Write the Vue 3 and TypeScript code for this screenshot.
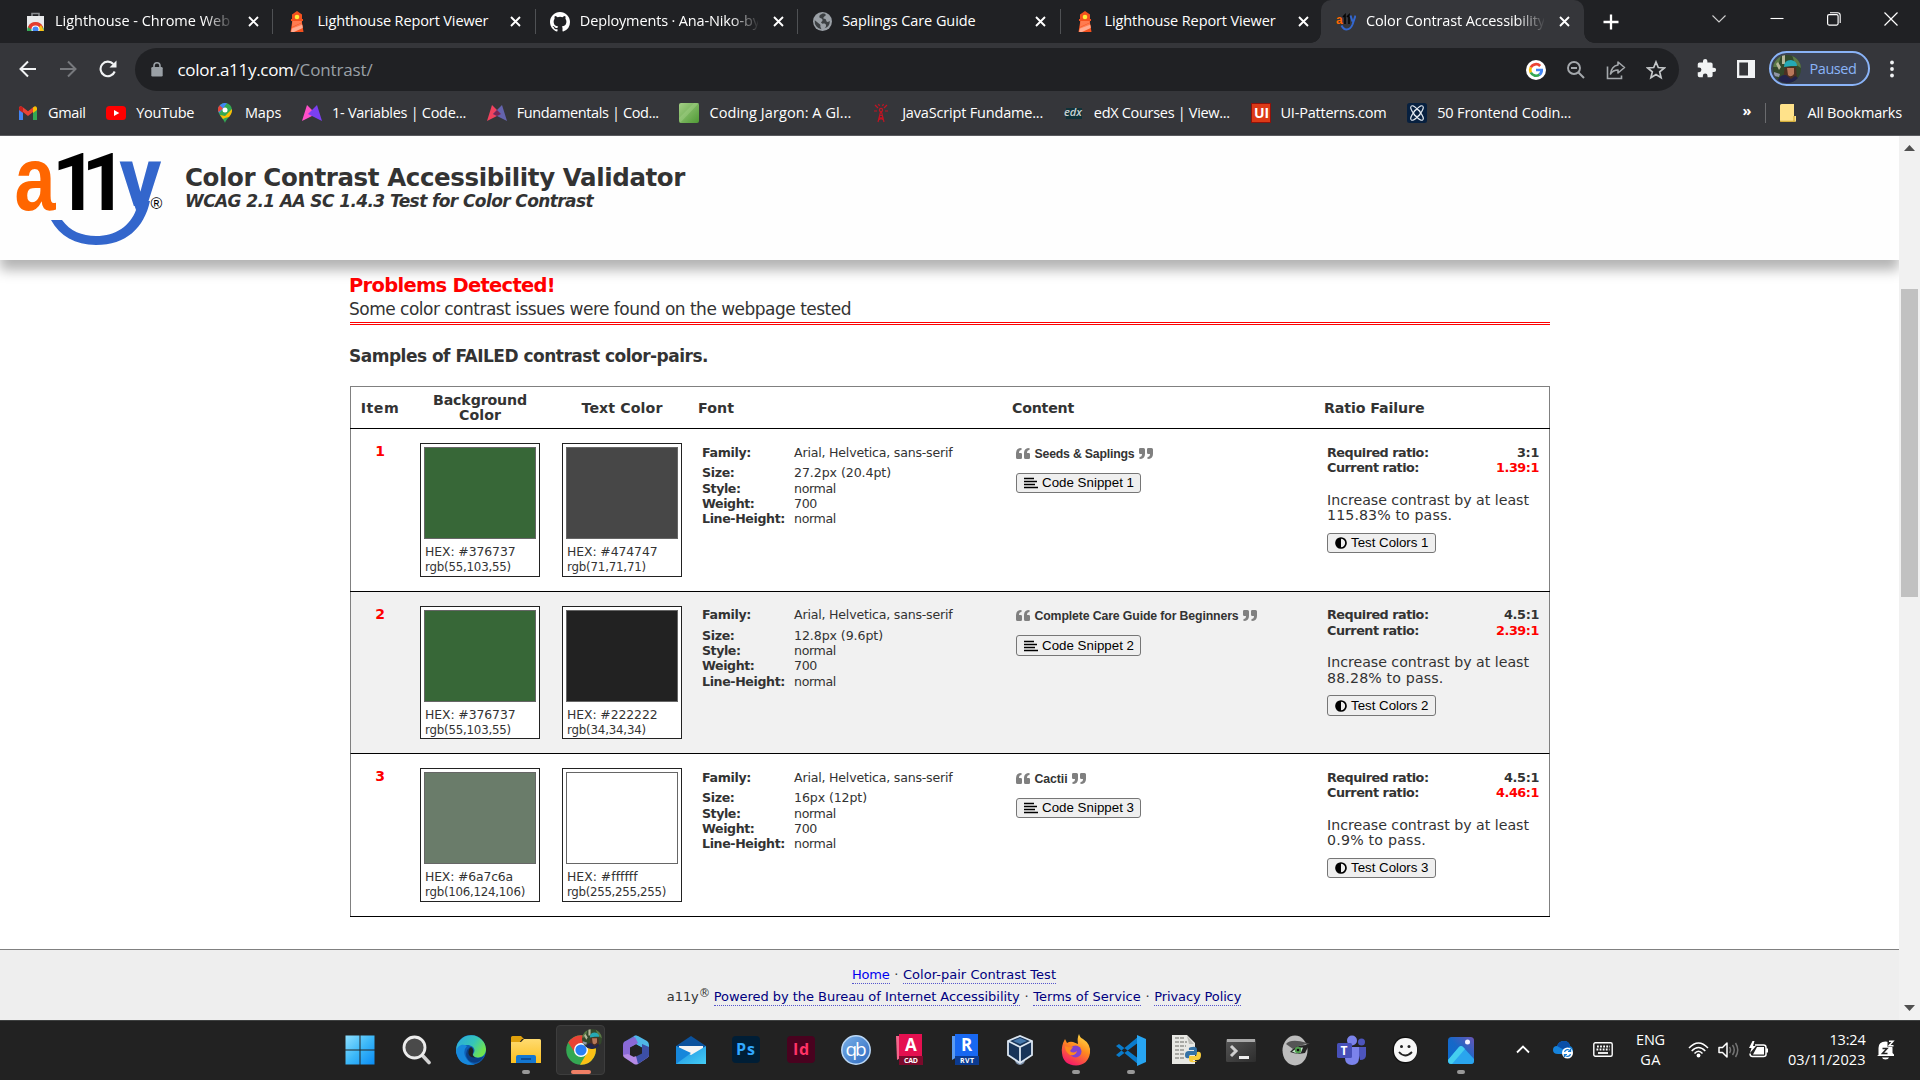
<script setup lang="ts">
import type { Directive } from 'vue'

// Spreads the letters of a label so that it takes up the given width.
const vFit: Directive<HTMLElement, number> = {
  mounted(el, { value }) {
    const count = (el.textContent ?? '').length
    const natural = el.getBoundingClientRect().width
    el.style.letterSpacing = `${(value - natural) / count}px`
    el.style.width = `${value}px`
  },
}

interface Tab { icon: string; title: string; width: number; fade?: boolean; active?: boolean }
const tabs: Tab[] = [
  { icon: 'store', title: 'Lighthouse - Chrome Web', width: 175, fade: true },
  { icon: 'light', title: 'Lighthouse Report Viewer', width: 171 },
  { icon: 'github', title: 'Deployments · Ana-Niko-by', width: 180, fade: true },
  { icon: 'globe', title: 'Saplings Care Guide', width: 133.5 },
  { icon: 'light', title: 'Lighthouse Report Viewer', width: 171 },
  { icon: 'a11y', title: 'Color Contrast Accessibility', width: 179, fade: true, active: true },
]

interface Bookmark { icon: string; label: string; width: number }
const bookmarks: Bookmark[] = [
  { icon: 'gmail', label: 'Gmail', width: 37.5 },
  { icon: 'youtube', label: 'YouTube', width: 58 },
  { icon: 'maps', label: 'Maps', width: 36.5 },
  { icon: 'vars', label: '1- Variables | Code...', width: 134 },
  { icon: 'fund', label: 'Fundamentals | Cod...', width: 142 },
  { icon: 'jargon', label: 'Coding Jargon: A Gl...', width: 142 },
  { icon: 'tower', label: 'JavaScript Fundame...', width: 141 },
  { icon: 'edx', label: 'edX Courses | View...', width: 136 },
  { icon: 'ui', label: 'UI-Patterns.com', width: 106 },
  { icon: 'react', label: '50 Frontend Codin...', width: 134 },
]

interface Swatch { hex: string; hexWidth: number; rgb: string; rgbWidth: number }
interface Row {
  id: number
  swatches: Swatch[]
  size: string
  sizeWidth: number
  content: string
  contentWidth: number
  required: string
  requiredWidth: number
  current: string
  advice: string
  adviceWidth: number
}
const green: Swatch = { hex: '#376737', hexWidth: 90.5, rgb: 'rgb(55,103,55)', rgbWidth: 86 }
const rows: Row[] = [
  {
    id: 1,
    swatches: [green, { hex: '#474747', hexWidth: 90.5, rgb: 'rgb(71,71,71)', rgbWidth: 79 }],
    size: '27.2px (20.4pt)', sizeWidth: 97,
    content: 'Seeds & Saplings', contentWidth: 100,
    required: '3:1', requiredWidth: 22, current: '1.39:1',
    advice: '115.83% to pass.', adviceWidth: 125,
  },
  {
    id: 2,
    swatches: [green, { hex: '#222222', hexWidth: 90.5, rgb: 'rgb(34,34,34)', rgbWidth: 79 }],
    size: '12.8px (9.6pt)', sizeWidth: 89,
    content: 'Complete Care Guide for Beginners', contentWidth: 204,
    required: '4.5:1', requiredWidth: 35, current: '2.39:1',
    advice: '88.28% to pass.', adviceWidth: 116.5,
  },
  {
    id: 3,
    swatches: [
      { hex: '#6a7c6a', hexWidth: 88, rgb: 'rgb(106,124,106)', rgbWidth: 100 },
      { hex: '#ffffff', hexWidth: 70, rgb: 'rgb(255,255,255)', rgbWidth: 99 },
    ],
    size: '16px (12pt)', sizeWidth: 73,
    content: 'Cactii', contentWidth: 33,
    required: '4.5:1', requiredWidth: 35, current: '4.46:1',
    advice: '0.9% to pass.', adviceWidth: 99,
  },
]
</script>

<template>
  <div class="screen">
    <svg class="defs" width="0" height="0">
      <defs>
        <linearGradient id="gWin" x1="0" y1="0" x2="1" y2="1"><stop offset="0" stop-color="#8fe0ff" /><stop offset=".5" stop-color="#3cb8f8" /><stop offset="1" stop-color="#0a8cf5" /></linearGradient>
        <linearGradient id="gEdge" x1="0" y1="0" x2="1" y2=".5"><stop offset="0" stop-color="#2aa7e2" /><stop offset=".6" stop-color="#35c5b8" /><stop offset="1" stop-color="#6fe34f" /></linearGradient>
        <linearGradient id="gFolder" x1="0" y1="0" x2="0" y2="1"><stop offset="0" stop-color="#ffdb70" /><stop offset="1" stop-color="#fcbf1e" /></linearGradient>
        <linearGradient id="gMail" x1="0" y1="0" x2="1" y2="1"><stop offset="0" stop-color="#1c8de0" /><stop offset="1" stop-color="#44cdf5" /></linearGradient>
        <linearGradient id="gFox" x1=".8" y1="0" x2=".3" y2="1"><stop offset="0" stop-color="#ffe14a" /><stop offset=".45" stop-color="#ff8a1e" /><stop offset="1" stop-color="#f5156c" /></linearGradient>
        <linearGradient id="gPhoto" x1="1" y1="0" x2="0" y2="1"><stop offset="0" stop-color="#6a55b5" /><stop offset=".5" stop-color="#1668c8" /><stop offset="1" stop-color="#0a6cd0" /></linearGradient>
        <linearGradient id="gJargon" x1="0" y1="0" x2="1" y2="1"><stop offset="0" stop-color="#a4cf86" /><stop offset="1" stop-color="#4f9a35" /></linearGradient>
        <linearGradient id="gQb" x1="0" y1="0" x2="1" y2="1"><stop offset="0" stop-color="#78b0ea" /><stop offset="1" stop-color="#2e69bd" /></linearGradient>
        <linearGradient id="gTerm" x1="0" y1="0" x2="1" y2="1"><stop offset="0" stop-color="#555" /><stop offset="1" stop-color="#2d2d2d" /></linearGradient>
        <clipPath id="avatarClip"><circle cx="14" cy="14" r="14" /></clipPath>
        <g id="avatar" clip-path="url(#avatarClip)">
          <rect width="28" height="28" fill="#33482c" />
          <path d="M0 0h8l-3 12H0zM19 0h9v13l-6-4z" fill="#5c7a48" />
          <path d="M9 0h3v9H9zM3 9l2-2 3 5-2 3z" fill="#b6b79a" />
          <path d="M12 12h11l1 12H10z" fill="#4c2f22" />
          <path d="M14 13h7v6q-3 4-6 1z" fill="#b8775a" />
          <path d="M4 28q2-9 9-8l5 4 4-3q5 2 5 7z" fill="#23244a" />
          <path d="M11 12q0-7 7-7 6 1 6 6l-6 0z" fill="#25a9b5" />
          <path d="M1 17l6 2-1 3-5-1z" fill="#8f95a5" />
        </g>
      </defs>
    </svg>

    <header class="tabstrip">
      <div v-for="(tab, i) in tabs" :key="i" class="tab" :class="{ active: tab.active, last: i === 4 }">
        <span class="favicon">
          <svg v-if="tab.icon === 'store'" width="19" height="20" viewBox="0 0 19 20"><path d="M6 4V1.500h7V4" fill="none" stroke="#888b8f" stroke-width="1.600" /><path d="M1 4h17v15H1z" fill="#e9eaec" /><path d="M1 19a8.500 8.500 0 0 1 17 0z" fill="#34a853" /><path d="M2 15q2-5 7.500-5t7.500 5l-1.500 2h-11z" fill="#e33b2e" /><path d="M10 19l5-6 3 6z" fill="#fbc116" /><circle cx="9.500" cy="17.500" r="4" fill="#fff" /><circle cx="9.500" cy="17.500" r="3" fill="#4285f4" /><path d="M1 19h17v1H1z" fill="#202124" /></svg>
          <svg v-else-if="tab.icon === 'light'" width="16" height="21" viewBox="0 0 16 21"><path d="M8 0l5 3.500V8h1v2h-1.300L14.500 21H1.500L3.300 10H2V8h1V3.500z" fill="#f4511e" /><path d="M3 16.500l9.800-4.500.7 4L2 20.500zM3.400 10h9.300l.2 1.500-10 4.500z" fill="#ff7b50" /><path d="M3 17.500l10.200-3.800.6 3.300L5 21H2.200z" fill="#ffab91" /><circle cx="8" cy="6" r="2.300" fill="#ffeb3b" /></svg>
          <svg v-else-if="tab.icon === 'github'" width="20" height="20" viewBox="0 0 16 16"><path fill="#fff" d="M8 0C3.580 0 0 3.580 0 8c0 3.540 2.290 6.530 5.470 7.590.4.070.55-.17.55-.38 0-.19-.01-.82-.01-1.490-2.010.37-2.530-.49-2.690-.94-.09-.23-.48-.94-.82-1.130-.28-.15-.68-.52-.01-.53.63-.01 1.080.58 1.230.82.72 1.210 1.870.87 2.330.66.07-.52.28-.87.51-1.070-1.780-.2-3.640-.89-3.640-3.950 0-.87.31-1.590.82-2.150-.08-.2-.36-1.020.08-2.120 0 0 .67-.21 2.200.82a7.700 7.700 0 0 1 4 0c1.530-1.040 2.200-.82 2.200-.82.44 1.100.16 1.920.08 2.120.51.56.82 1.270.82 2.150 0 3.070-1.870 3.750-3.650 3.950.29.25.54.73.54 1.480 0 1.070-.01 1.930-.01 2.200 0 .21.15.46.55.38A8.010 8.010 0 0 0 16 8c0-4.420-3.580-8-8-8" /></svg>
          <svg v-else-if="tab.icon === 'globe'" width="19" height="19" viewBox="0 0 18 18"><circle cx="9" cy="9" r="9" fill="#9aa0a6" /><path d="M2 8l5 4v2l1 2.300A7.500 7.500 0 0 1 1.600 8zM9 1.500c-1.500 1-3 1-3 3s3 1 3 3-2 1.500-1 3 3-.5 4 1 0 3-1 4a7.500 7.500 0 0 0 5-7l-2 1c-2 0-1-3-3-3s-1-2 0-2.500 1-1 1-1.500-1-1-3-1z" fill="#3c4043" /></svg>
          <svg v-else width="20" height="20" viewBox="0 0 20 20"><text x="0" y="12" font-family="Liberation Sans" font-weight="700" font-size="12" fill="#ff6600">a</text><path d="M7 5l2-2v9M11 5l2-2v9" fill="none" stroke="#050505" stroke-width="1.600" /><path d="M14.500 3.500l2 6M19.500 3.500l-3 9q-2 5-6 5-3 0-5-4" fill="none" stroke="#3367cf" stroke-width="2" /></svg>
        </span>
        <span class="tab-title" :class="{ fade: tab.fade }"><span v-fit="tab.width" class="fit">{{ tab.title }}</span></span>
        <svg class="tab-close" width="11" height="11" viewBox="0 0 11 11"><path d="M1 1l9 9M10 1l-9 9" stroke="#fff" stroke-width="1.900" /></svg>
      </div>
      <svg class="new-tab" width="16" height="16" viewBox="0 0 16 16"><path d="M8 .5v15M.5 8h15" stroke="#fff" stroke-width="2.300" /></svg>
      <div class="window-buttons">
        <svg width="14" height="14" viewBox="0 0 14 14"><path d="M.5 3.500L7 10l6.500-6.500" fill="none" stroke="#d0d0d0" stroke-width="1.100" /></svg>
        <svg width="14" height="14" viewBox="0 0 14 14"><path d="M.5 6.500h13" stroke="#fff" stroke-width="1.100" /></svg>
        <svg width="14" height="14" viewBox="0 0 14 14"><rect x=".6" y="2.600" width="10.500" height="10.500" rx="1.500" fill="none" stroke="#fff" stroke-width="1.200" /><path d="M3 .8h7.500a2.700 2.700 0 0 1 2.700 2.700V11" fill="none" stroke="#fff" stroke-width="1.100" /></svg>
        <svg width="14" height="14" viewBox="0 0 14 14"><path d="M.5.5l13 13M13.500.5l-13 13" stroke="#fff" stroke-width="1.200" /></svg>
      </div>
    </header>

    <div class="toolbar">
      <div class="nav">
        <svg width="18" height="18" viewBox="0 0 18 18"><path d="M17 9H2M9 1.500L1.500 9 9 16.500" fill="none" stroke="#f1f3f4" stroke-width="2" /></svg>
        <svg width="18" height="18" viewBox="0 0 18 18"><path d="M1 9h15M9 1.500L16.500 9 9 16.500" fill="none" stroke="#77797d" stroke-width="2" /></svg>
        <svg width="18" height="18" viewBox="0 0 18 18"><path d="M15.700 11.500A7.300 7.300 0 1 1 14.300 4" fill="none" stroke="#f1f3f4" stroke-width="2.100" /><path d="M17.500.5v7h-7z" fill="#f1f3f4" /></svg>
      </div>
      <div class="omnibox">
        <svg class="lock" width="12" height="15" viewBox="0 0 12 15"><rect x=".3" y="5" width="11.400" height="9.500" rx="1.300" fill="#9aa0a6" /><path d="M3 6V3.800a3 3 0 0 1 6 0V6" fill="none" stroke="#9aa0a6" stroke-width="1.600" /></svg>
        <span v-fit="116" class="fit host">color.a11y.com</span><span v-fit="79" class="fit path">/Contrast/</span>
        <div class="omni-icons">
          <svg width="20" height="20" viewBox="0 0 20 20"><circle cx="10" cy="10" r="10" fill="#fff" /><g fill="none" stroke-width="2.700"><path d="M14.200 6A5.800 5.800 0 0 0 4.800 7.500" stroke="#ea4335" /><path d="M4.800 7.400a5.800 5.800 0 0 0 0 5.200" stroke="#fbbc05" /><path d="M4.800 12.500a5.800 5.800 0 0 0 8.800 2" stroke="#34a853" /><path d="M13.400 14.700A5.600 5.600 0 0 0 15.700 10H10" stroke="#4285f4" /></g></svg>
          <svg width="20" height="20" viewBox="0 0 20 20"><circle cx="8" cy="8" r="6" fill="none" stroke="#a4a8ac" stroke-width="1.900" /><path d="M12.500 12.500L18 18M5 8h6" stroke="#a4a8ac" stroke-width="2" /></svg>
          <svg width="20" height="20" viewBox="0 0 20 20"><path d="M1.500 6.500v12h14v-3" fill="none" stroke="#a4a8ac" stroke-width="1.600" /><path d="M12 2l6.500 5.500L12 13v-3q-5 0-7.500 4Q5.500 6 12 5z" fill="none" stroke="#a4a8ac" stroke-width="1.600" stroke-linejoin="round" /></svg>
          <svg width="20" height="20" viewBox="0 0 20 20"><path d="M10 2l2.300 5.500 6 .5-4.600 3.900 1.400 5.800L10 14.600l-5.100 3.100 1.400-5.800L1.700 8l6-.5z" fill="none" stroke="#c4c7c9" stroke-width="1.700" /></svg>
        </div>
      </div>
      <svg class="puzzle" width="21" height="21" viewBox="0 0 24 24"><path fill="#f1f3f4" d="M20.500 11H19V7a2 2 0 0 0-2-2h-4V3.500a2.500 2.500 0 0 0-5 0V5H4a2 2 0 0 0-2 2v3.800h1.500a2.700 2.700 0 0 1 0 5.400H2V20a2 2 0 0 0 2 2h3.800v-1.500a2.700 2.700 0 0 1 5.400 0V22H17a2 2 0 0 0 2-2v-4h1.500a2.500 2.500 0 0 0 0-5" /></svg>
      <svg class="panel" width="18" height="18" viewBox="0 0 18 18"><path fill="#f1f3f4" fill-rule="evenodd" d="M0 0h18v18H0zM2.300 2.500v13h8.700v-13z" /></svg>
      <div class="profile">
        <svg width="28" height="28" viewBox="0 0 28 28"><use href="#avatar" /></svg>
        <span v-fit="47" class="fit">Paused</span>
      </div>
      <svg class="menu" width="4" height="18" viewBox="0 0 4 18"><g fill="#f1f3f4"><circle cx="2" cy="2.500" r="1.900" /><circle cx="2" cy="9" r="1.900" /><circle cx="2" cy="15.500" r="1.900" /></g></svg>
    </div>

    <nav class="bookmarks">
      <a v-for="b in bookmarks" :key="b.label" class="bookmark">
        <svg width="20" height="20" viewBox="0 0 20 20">
          <g v-if="b.icon === 'gmail'"><path d="M1 4v13h4V9z" fill="#4285f4" /><path d="M19 4v13h-4V9z" fill="#34a853" /><path d="M1 4.500Q2 2.500 4.500 4L10 8.200 15.500 4l-.5 5-5 4-5-4z" fill="#ea4335" /><path d="M15 4.500Q18 2 19 5v2l-4 3z" fill="#fbbc04" /><path d="M1 5v2l4 3V4.300Q2 2.500 1 5" fill="#c5221f" /></g>
          <g v-else-if="b.icon === 'youtube'"><rect y="3" width="20" height="14" rx="3.500" fill="#f00" /><path d="M8 7l5.300 3L8 13z" fill="#fff" /></g>
          <g v-else-if="b.icon === 'maps'"><path d="M10 20c-1-4-7-8-7-13a7 7 0 0 1 14 0c0 5-6 9-7 13" fill="#34a853" /><path d="M3 7a7 7 0 0 1 9-6.700L4.500 10Q3 9 3 7" fill="#4285f4" /><path d="M4.700 2.500L8 5.500 3.500 9Q2 5 4.700 2.500" fill="#ea4335" /><path d="M10 13l7-7q.5 4-3 8l-4 1-2 1-3-4z" fill="#fbbc04" /><circle cx="10" cy="7" r="2.500" fill="#fff" /></g>
          <g v-else-if="b.icon === 'vars'"><path d="M5 2l9 9L0 18z" fill="#ff4fc8" /><path d="M15 2l5 16L6 11z" fill="#7b3ff2" /></g>
          <g v-else-if="b.icon === 'fund'"><path d="M5 2l9 9L0 18z" fill="#f0425e" /><path d="M15 2l5 16L6 11z" fill="#6464ae" /><path d="M10 7l4 4-4 2-4-2z" fill="#7a2455" /></g>
          <g v-else-if="b.icon === 'jargon'"><rect width="20" height="20" rx="2" fill="url(#gJargon)" /><path d="M0 15L15 0h5L1 20z" fill="#a8d48c" opacity=".4" /></g>
          <g v-else-if="b.icon === 'tower'" fill="none" stroke="#c01423" stroke-width="1.200"><circle cx="9" cy="7" r="1.600" /><path d="M8.500 9L6 19M9.500 9L12 19M7 14l4.500 3M11 14l-4.500 3M7.600 12.500h3M3 2l3 3M15 2l-3 3M2 8h3M13 8h3M6.500 1l1 2M11.500 1l-1 2" /></g>
          <g v-else-if="b.icon === 'edx'"><path d="M2 5h16v11H2z" fill="#103238" /><text x="0" y="13" font-family="Open Sans" font-size="10" font-style="italic" font-weight="600" fill="#c9d1d2" textLength="18" lengthAdjust="spacingAndGlyphs">edx</text></g>
          <g v-else-if="b.icon === 'ui'"><rect width="20" height="20" fill="#8e120b" /><rect x="1" y="1" width="18" height="18" fill="#dc3a17" /><text x="3" y="15" font-family="Open Sans" font-size="14" font-weight="700" fill="#fff">UI</text></g>
          <g v-else><rect width="20" height="20" rx="2.500" fill="#07203f" /><g fill="none" stroke="#e5ebf2" stroke-width="1"><ellipse cx="10" cy="10" rx="9" ry="3" transform="rotate(50 10 10)" /><ellipse cx="10" cy="10" rx="9" ry="3" transform="rotate(-50 10 10)" /><circle cx="10" cy="10" r="3.500" /></g></g>
        </svg>
        <span v-fit="b.width" class="fit">{{ b.label }}</span>
      </a>
      <span class="more">»</span>
      <span class="divider"></span>
      <svg class="folder" width="17" height="18" viewBox="0 0 17 18"><path d="M0 1.500Q0 0 1.500 0H14v12h2v4.500q0 1.500-1.500 1.500h-13Q0 18 0 16.500z" fill="#ffe28a" /><path d="M0 17.300h15M14 12v5" stroke="#c9a227" stroke-width="1" fill="none" /></svg>
      <span v-fit="94.5" class="fit">All Bookmarks</span>
    </nav>

    <div class="viewport">
      <div class="page">
        <div class="masthead">
          <svg class="logo" width="170" height="110" viewBox="0 0 170 110">
            <defs><clipPath id="yTop"><path d="M110 0h60v70h-60z" /></clipPath></defs>
            <text transform="translate(14.500 73.500) scale(.82 1)" font-family="Liberation Sans" font-weight="700" font-size="90" fill="#ff6600">a</text>
            <text x="52 81.500" y="74" font-family="Roboto" font-weight="700" font-size="80" fill="#000">11</text>
            <g clip-path="url(#yTop)"><text transform="translate(119.500 74) scale(.92 1)" font-family="Roboto" font-weight="700" font-size="90" fill="#3366cc">y</text></g>
            <path d="M51 84h11c8 11 20 16 34 16 20 0 34-10 40-26l-3-9 17 0c-6 27-24 44-54 44-21 0-36-9-45-25" fill="#3366cc" />
            <text x="150.500" y="73" font-family="Liberation Sans" font-size="16" fill="#000">®</text>
          </svg>
          <div class="headings">
            <h1><span v-fit="500" class="fit">Color Contrast Accessibility Validator</span></h1>
            <p><span v-fit="408" class="fit">WCAG 2.1 AA SC 1.4.3 Test for Color Contrast</span></p>
          </div>
        </div>

        <main class="report">
          <h2><span v-fit="206" class="fit">Problems Detected!</span></h2>
          <p class="summary"><span v-fit="502" class="fit">Some color contrast issues were found on the webpage tested</span></p>
          <h3><span v-fit="359" class="fit">Samples of FAILED contrast color-pairs.</span></h3>

          <div class="table">
            <div class="row head">
              <div class="center single"><span v-fit="38.5" class="fit">Item</span></div>
              <div class="center"><span v-fit="94" class="fit">Background</span><br><span v-fit="42" class="fit">Color</span></div>
              <div class="center single"><span v-fit="81" class="fit">Text Color</span></div>
              <div class="left single"><span v-fit="36" class="fit">Font</span></div>
              <div class="left single"><span v-fit="62" class="fit">Content</span></div>
              <div class="left single"><span v-fit="100.5" class="fit">Ratio Failure</span></div>
            </div>
            <div v-for="row in rows" :key="row.id" class="row item" :class="{ shaded: row.id === 2 }">
              <div class="number">{{ row.id }}</div>
              <div v-for="(s, i) in row.swatches" :key="i" class="swatch-cell">
                <div class="swatch">
                  <div class="chip" :style="{ background: s.hex }"></div>
                  <p><span v-fit="s.hexWidth" class="fit">HEX: {{ s.hex }}</span></p>
                  <p class="rgb"><span v-fit="s.rgbWidth" class="fit">{{ s.rgb }}</span></p>
                </div>
              </div>
              <dl class="font">
                <dt class="first"><span v-fit="49" class="fit">Family:</span></dt><dd class="first"><span v-fit="158.500" class="fit">Arial, Helvetica, sans-serif</span></dd>
                <dt><span v-fit="32.500" class="fit">Size:</span></dt><dd><span v-fit="row.sizeWidth" class="fit">{{ row.size }}</span></dd>
                <dt><span v-fit="38.500" class="fit">Style:</span></dt><dd><span v-fit="42" class="fit">normal</span></dd>
                <dt><span v-fit="52.500" class="fit">Weight:</span></dt><dd><span v-fit="23" class="fit">700</span></dd>
                <dt><span v-fit="83" class="fit">Line-Height:</span></dt><dd><span v-fit="42" class="fit">normal</span></dd>
              </dl>
              <div class="content">
                <div class="quote">
                  <svg width="14" height="11" viewBox="0 0 14 11"><path fill="#808080" d="M1.500 11Q0 11 0 9.500V5q0-5 5.500-5v2Q3 2 3 5h1.700Q6 5 6 6.300v3.400Q6 11 4.700 11zM9.500 11Q8 11 8 9.500V5q0-5 5.500-5v2Q11 2 11 5h1.700Q14 5 14 6.300v3.400Q14 11 12.700 11z" /></svg>
                  <span v-fit="row.contentWidth" class="fit">{{ row.content }}</span>
                  <svg class="close" width="14" height="11" viewBox="0 0 14 11"><path transform="rotate(180 7 5.500)" fill="#808080" d="M1.500 11Q0 11 0 9.500V5q0-5 5.500-5v2Q3 2 3 5h1.700Q6 5 6 6.300v3.400Q6 11 4.700 11zM9.500 11Q8 11 8 9.500V5q0-5 5.500-5v2Q11 2 11 5h1.700Q14 5 14 6.300v3.400Q14 11 12.700 11z" /></svg>
                </div>
                <button class="snippet">
                  <svg width="14" height="12" viewBox="0 0 14 12"><path d="M0 1.500h10M0 4.500h13M0 7.500h11M0 10.500h14" stroke="#000" stroke-width="1.600" /></svg>
                  <span v-fit="92" class="fit">Code Snippet {{ row.id }}</span>
                </button>
              </div>
              <div class="ratio">
                <div class="pair"><span v-fit="101.500" class="fit">Required ratio:</span><span v-fit="row.requiredWidth" class="fit">{{ row.required }}</span></div>
                <div class="pair"><span v-fit="92" class="fit">Current ratio:</span><span v-fit="43" class="fit bad">{{ row.current }}</span></div>
                <p><span v-fit="202" class="fit">Increase contrast by at least</span><br><span v-fit="row.adviceWidth" class="fit">{{ row.advice }}</span></p>
                <button class="test">
                  <svg width="12" height="12" viewBox="0 0 12 12"><circle cx="6" cy="6" r="5" fill="none" stroke="#000" stroke-width="1.700" /><path d="M6 1a5 5 0 0 0 0 10z" fill="#000" /></svg>
                  <span v-fit="77.500" class="fit">Test Colors {{ row.id }}</span>
                </button>
              </div>
            </div>
          </div>
        </main>

        <footer class="footer">
          <p><a v-fit="37.500" class="fit home">Home</a><i>·</i><a v-fit="153" class="fit">Color-pair Contrast Test</a></p>
          <p><span v-fit="32" class="fit">a11y</span><sup>®</sup><a v-fit="306" class="fit">Powered by the Bureau of Internet Accessibility</a><i>·</i><a v-fit="107.500" class="fit">Terms of Service</a><i>·</i><a v-fit="87" class="fit">Privacy Policy</a></p>
        </footer>
      </div>
      <div class="scrollbar">
        <svg width="11" height="6" viewBox="0 0 11 6"><path d="M0 6l5.500-6L11 6z" fill="#505050" /></svg>
        <div class="thumb"></div>
        <svg width="11" height="6" viewBox="0 0 11 6"><path d="M0 0l5.500 6L11 0z" fill="#505050" /></svg>
      </div>
    </div>

    <div class="taskbar">
      <div class="apps">
        <div class="app"><svg width="30" height="30" viewBox="0 0 30 30"><path fill="url(#gWin)" d="M.5.500h14v14H.5zM15.500.500h14v14h-14zM.5 15.500h14v14H.5zM15.500 15.500h14v14h-14z" /></svg></div>
        <div class="app"><svg width="30" height="30" viewBox="0 0 30 30"><path d="M21 20l7 7.500" stroke="#d2d2d2" stroke-width="3.600" stroke-linecap="round" /><circle cx="13.500" cy="12.500" r="10.500" fill="#4a4a4a" stroke="#ececec" stroke-width="2.800" /></svg></div>
        <div class="app"><svg width="30" height="30" viewBox="0 0 30 30"><circle cx="15" cy="15" r="15" fill="#0e5eb5" /><path d="M.3 12.500A15 15 0 0 1 30 14c0 6-4 8.500-8.500 8.500-4 0-5.500-2-4-4 4-6-5-11-11-7Q2 14 .3 19z" fill="url(#gEdge)" /><path d="M.1 17C1 10 7 8 11 11q-4 4-2 10 3 7 10 8.500Q3 32 .1 17" fill="#1788dc" /><path d="M14 12q4 2 3 6-1 4 4 5 4 .5 7-2-5 9-13 6-7-4-4-12z" fill="#093e84" /><path d="M15 12q3 2 2.200 5-2 4 2.300 5.500-6 .5-7-4-.5-4 2.500-6.500" fill="#222" /></svg></div>
        <div class="app"><svg width="32" height="30" viewBox="0 0 32 30"><path d="M1 2.500Q1 1 2.500 1H11l3 3h-2l-3 4H1z" fill="#e0a10c" /><path d="M1 7h10l3-3h15.500Q31 4 31 5.500V28H1z" fill="url(#gFolder)" /><path d="M6 28v-6q0-2 2-2h16q2 0 2 2v6z" fill="#1477d1" /><path d="M11 24h10" stroke="#0b4d97" stroke-width="2" /></svg><span class="dot"></span></div>
        <div class="app current"><svg width="30" height="30" viewBox="0 0 30 30"><circle cx="15" cy="15" r="14.800" fill="#34a853" /><path d="M2.200 7.600A14.800 14.800 0 0 1 27.800 7.600L15 8.300 9.500 18.500z" fill="#ea4335" /><path d="M27.800 7.600A14.800 14.800 0 0 1 14 29.800L21 18l-1-10z" fill="#fbc016" /><circle cx="15" cy="15" r="7" fill="#fff" /><circle cx="15" cy="15" r="5.600" fill="#2a7ff5" /></svg><svg class="badge" width="20" height="20" viewBox="0 0 28 28"><use href="#avatar" /></svg><span class="dot"></span></div>
        <div class="app"><svg width="28" height="30" viewBox="0 0 28 30"><path d="M12 1L2 7v14l6 3V13l8-5V1.500Q14 0 12 1" fill="#5d78cf" /><path d="M12 1q2-1 4 0l9 5q2 1.500 2 4v10l-7-3v-4l-8-5z" fill="#4fb7e8" /><path d="M2 7q-1 1-1 3v10l6 3 1-1V13l8-5-3-6z" fill="#8a6ad6" /><path d="M1 20q0 2 2 3l9 6q2 1 4 0l9-6q2-1 2-3l-1-2-6-2-8 6-6-3z" fill="#b58be6" /><path d="M20 9l7 3v8q0 2-2 3l-9 6-2-8 6-4z" fill="#3c4fa6" /><path d="M14 9.500l6 3v6l-6 3-6-3v-6z" fill="#222" /></svg></div>
        <div class="app"><svg width="30" height="30" viewBox="0 0 30 30"><path d="M0 11L15 1l15 10v4H0z" fill="#0b529d" /><path d="M3 11h24v9H3z" fill="#f4f4f4" /><path d="M0 11l15 9 15-9v18H0z" fill="url(#gMail)" /><path d="M0 29l15-11L0 11z" fill="#1687db" /></svg></div>
        <div class="app"><svg width="30" height="30" viewBox="0 0 30 30"><rect x="1" y="1" width="28" height="27" rx="4" fill="#001e36" /><text x="5" y="20" font-family="Open Sans" font-size="16" font-weight="700" fill="#31a8ff" textLength="19">Ps</text></svg></div>
        <div class="app"><svg width="30" height="30" viewBox="0 0 30 30"><rect x="1" y="1" width="28" height="27" rx="4" fill="#49021f" /><text x="7" y="20" font-family="Open Sans" font-size="16" font-weight="700" fill="#ff3366" textLength="16">Id</text></svg></div>
        <div class="app"><svg width="30" height="30" viewBox="0 0 30 30"><circle cx="15" cy="15" r="14.200" fill="url(#gQb)" stroke="#bcd8f5" stroke-width="1.500" /><text x="4.500" y="20.500" font-family="Open Sans" font-size="19" fill="#fff" textLength="21">qb</text></svg></div>
        <div class="app"><svg width="30" height="32" viewBox="0 0 30 32"><path d="M0 2h6v21l-5 3z" fill="#f4668c" /><path d="M3 0h23v22H3z" fill="#e51050" /><path d="M3 22h24v9H3z" fill="#7c0a2c" /><text x="9" y="17" font-family="Open Sans" font-size="17" font-weight="700" fill="#fff">A</text><text x="8" y="29" font-family="Open Sans" font-size="7" font-weight="700" fill="#fff" textLength="14">CAD</text></svg></div>
        <div class="app"><svg width="30" height="32" viewBox="0 0 30 32"><path d="M1 2h5v21l-5 3z" fill="#5a9bf3" /><path d="M4 0h23v22H4z" fill="#1868f2" /><path d="M4 22h24v9H4z" fill="#0c3b90" /><text x="10" y="17" font-family="Open Sans" font-size="17" font-weight="700" fill="#fff">R</text><text x="9" y="29" font-family="Open Sans" font-size="7" font-weight="700" fill="#fff" textLength="14">RVT</text></svg></div>
        <div class="app"><svg class="shift" width="30" height="30" viewBox="0 0 30 30"><circle cx="15" cy="25" r="5" fill="#7f93ad" /><path d="M3 6l12-5 12 5v14l-12 8L3 20z" fill="#183459" stroke="#dbe6f2" stroke-width="1.800" /><path d="M3 6l12 6 12-6M15 12v16" fill="none" stroke="#dbe6f2" stroke-width="1.800" /><path d="M8 6l7-3 7 3-7 3z" fill="#4678ac" /></svg></div>
        <div class="app"><svg width="30" height="32" viewBox="0 0 30 32"><path d="M18 0q1 4 4 5 8 5 7 14-2 12-14 12.500Q2 31 1 19 0 12 4 5l2 4q3-2 6-1l5 2q-1-6 1-10" fill="url(#gFox)" /><circle cx="14.500" cy="17.500" r="6" fill="#8042cf" /><path d="M4 12q5 2 8 1l-3 4q3 3 7 0-1 5-7 4-5-3-5-9" fill="#ff8a1e" /></svg><span class="dot"></span></div>
        <div class="app"><svg width="31" height="31" viewBox="0 0 31 31"><path d="M1 11l3-2 20 15v6zM1 20l3 2L24 7V1z" fill="#0a7ccc" /><path d="M22 0l9 4v23l-9 4z" fill="#27a5f2" /></svg><span class="dot"></span></div>
        <div class="app"><svg width="30" height="30" viewBox="0 0 30 30"><path d="M1 0h15l8 8v21H1z" fill="#e8e8e4" /><path d="M4 3h9M4 7h12M4 11h11M4 15h9M4 19h9M4 23h9" stroke="#94948f" stroke-width="1.400" stroke-dasharray="4 1" /><path d="M16 1l7 8h-5z" fill="#bdbdb8" /><path d="M21 12q5-1 5 3v5h-7q-1 0-1 3-4 1-4-3 0-4 4-4h5v-1h-5q-1-3 3-3" fill="#3572a5" /><path d="M23 27q-5 1-5-3v-3h6q2 0 2-4 4-1 4 3 0 5-4 5h-4v1h4q0 1-3 1" fill="#f8cd3d" /></svg></div>
        <div class="app"><svg width="30" height="30" viewBox="0 0 30 30"><rect y="4" width="30" height="23" rx="1.500" fill="url(#gTerm)" /><path d="M1 4h28v3H1z" fill="#aaa" /><path d="M5 11l5 5-5 5" fill="none" stroke="#cfcfcf" stroke-width="3" /><path d="M13 22.500h10" stroke="#efefef" stroke-width="3" /></svg></div>
        <div class="app"><svg width="30" height="31" viewBox="0 0 30 31"><ellipse cx="14" cy="15.500" rx="12.500" ry="15" fill="#bcbcbc" /><path d="M5 9Q10 3 26 8l3 1q-9 0-17 5z" fill="#555" /><path d="M9 17q6-8 19-7l-4 8q-8 2-15-1" fill="#242424" /><path d="M11 16.500q5-4 11-4l-2 5q-4 2-9-1" fill="#c9ead0" /><circle cx="17" cy="15" r="3.200" fill="#4f9e4c" /><circle cx="17" cy="15" r="1.300" fill="#111" /></svg></div>
        <div class="app"><svg width="30" height="31" viewBox="0 0 30 31"><circle cx="25.500" cy="7" r="3.500" fill="#4d55bd" /><path d="M21 12h9v8q0 5-6 5z" fill="#4d55bd" /><circle cx="16" cy="5.500" r="5" fill="#7b83eb" /><path d="M9 12h14v11q0 7-7 7t-7-7z" fill="#7b83eb" /><rect x="1" y="8" width="15" height="15" rx="1.500" fill="#4750b8" /><text x="4.500" y="20" font-family="Open Sans" font-size="12" font-weight="700" fill="#fff">T</text></svg></div>
        <div class="app"><svg class="shift" width="30" height="30" viewBox="0 0 30 30"><ellipse cx="15" cy="15" rx="12.500" ry="13.500" fill="#101010" /><rect x="4" y="3" width="23" height="24" rx="11" fill="#f7f7f7" /><circle cx="11.500" cy="11.500" r="1.500" fill="#222" /><circle cx="19" cy="11.500" r="1.500" fill="#222" /><path d="M9 17q6 7 13 0" fill="none" stroke="#222" stroke-width="1.800" /></svg></div>
        <div class="app"><svg width="28" height="28" viewBox="0 0 28 28"><rect x="1" y="1" width="26" height="27" rx="3.500" fill="url(#gPhoto)" /><path d="M1 24l11-13q2-2 4 0l11 12v2q0 3-3 3H4q-3 0-3-4" fill="#2aa5ee" /><path d="M1 24l11-13q2-2 4 0l2 2L5 28Q1 28 1 24" fill="#44ceef" /><circle cx="20.500" cy="6" r="2.500" fill="#f2f2ff" /></svg><span class="dot"></span></div>
      </div>
      <div class="tray">
        <svg class="up" width="14" height="9" viewBox="0 0 14 9"><path d="M1 7.500l6-6 6 6" fill="none" stroke="#fff" stroke-width="1.800" /></svg>
        <svg class="drive" width="21" height="18" viewBox="0 0 21 18"><path d="M5 13Q0 13 0 9q0-4 4-4 2-5 7-5 5 0 6 5 3 1 3 5 0 3-3 3z" fill="#1683dc" /><path d="M4 5q2-5 7-5 5 0 6 5l-4 5z" fill="#0a4fa8" /><circle cx="14.500" cy="12" r="5.500" fill="#fff" /><path d="M11.500 11a3.200 3.200 0 0 1 5.800-1M17.500 13a3.200 3.200 0 0 1-5.800 1M17.600 8v2.500H15M11.400 16v-2.500H14" fill="none" stroke="#1679cf" stroke-width="1.200" /></svg>
        <svg class="keys" width="20" height="15" viewBox="0 0 20 15"><rect x=".8" y=".8" width="18.400" height="13.400" rx="1.500" fill="none" stroke="#fff" stroke-width="1.400" /><path d="M4 4.500h13M3.500 7.500h13" stroke="#fff" stroke-width="1.800" stroke-dasharray="1.800 1.300" /><path d="M5 11h10" stroke="#fff" stroke-width="1.800" /></svg>
        <div class="lang"><span v-fit="29" class="fit">ENG</span><span v-fit="20.500" class="fit">GA</span></div>
        <svg class="wifi" width="21" height="16" viewBox="0 0 21 16"><g fill="none" stroke="#fff" stroke-width="1.500"><path d="M1 6Q10.500-4 20 6M3.700 9q6.800-7 13.600 0M6.500 11.500q4-4.500 8 0" /></g><circle cx="10.500" cy="13.500" r="1.900" fill="#fff" /></svg>
        <svg class="sound" width="21" height="18" viewBox="0 0 21 18"><path d="M1 6.500h3.500L9 2v14l-4.500-4.500H1z" fill="none" stroke="#fff" stroke-width="1.500" stroke-linejoin="round" /><path d="M11.500 6q2 3 0 6M14.500 4q3.500 5 0 10M17.500 2q4.500 7 0 14" fill="none" stroke="#747474" stroke-width="1.500" /></svg>
        <svg class="battery" width="21" height="17" viewBox="0 0 21 17"><path d="M7 4h8.500Q18 4 18 6.500v7q0 2-2.500 2h-11q-2.500 0-2.500-3" fill="none" stroke="#fff" stroke-width="1.500" /><path d="M9 6h7v7.500H5zM18 7.500h2v4h-2zM4.500 0L1 7h2.500L2 12l6-7H5L6.500 0z" fill="#fff" /></svg>
        <div class="clock"><span v-fit="36" class="fit">13:24</span><span v-fit="77.500" class="fit">03/11/2023</span></div>
        <svg class="bell" width="18" height="20" viewBox="0 0 18 20"><path d="M1.500 15V8q0-6.500 7-6.500T15.500 8v5l1.500 1.500V16H0zM5 17.500h7q-.5 2-3.500 2T5 17.500" fill="#fff" /><path d="M5.500 8.500h4.500l-4.500 5h5" fill="none" stroke="#222" stroke-width="1.600" /><path d="M10.500 0h7.500v7h-7.500z" fill="#222" /><path d="M12 1.200h4l-4 4.500h4.500" fill="none" stroke="#fff" stroke-width="1.500" /></svg>
      </div>
    </div>
  </div>
</template>

<style>
body {
  margin: 0;
  overflow: hidden;
}
</style>

<style scoped>
* {
  box-sizing: border-box;
}
.screen {
  width: 1920px;
  height: 1080px;
  display: flex;
  flex-direction: column;
  overflow: hidden;
  background: #35363a;
  color: #fff;
  font-family: "Open Sans", "Noto Sans", sans-serif;
  font-size: 14.5px;
}
.defs {
  position: absolute;
}
svg {
  display: block;
  flex: none;
}
p, h1, h2, h3, dl, dd {
  margin: 0;
}
.fit {
  display: inline-block;
  white-space: pre;
}

.tabstrip {
  height: 43px;
  flex: none;
  display: flex;
  align-items: center;
  background: #202124;
  padding-left: 11px;
}
.tab {
  position: relative;
  width: 262.4px;
  height: 43px;
  flex: none;
  display: flex;
  align-items: center;
  padding-left: 14px;
}
.tab::after {
  content: "";
  position: absolute;
  right: 0;
  top: 9px;
  width: 1px;
  height: 25px;
  background: #4f5154;
}
.tab.last::after,
.tab.active::after {
  display: none;
}
.tab.active {
  width: 263px;
  margin-left: -2px;
  padding-left: 15px;
  background: #35363a;
  border-radius: 10px 10px 0 0;
}
.tab.active::before {
  content: "";
  position: absolute;
  left: -10px;
  bottom: 0;
  width: 283px;
  height: 10px;
  background:
    radial-gradient(circle at 0 0, transparent 9.500px, #35363a 10px) left / 10px 10px no-repeat,
    radial-gradient(circle at 100% 0, transparent 9.500px, #35363a 10px) right / 10px 10px no-repeat;
}
.favicon {
  width: 20px;
  display: flex;
  justify-content: center;
}
.tab-title {
  width: 178px;
  margin-left: 10px;
  overflow: hidden;
  white-space: nowrap;
  line-height: 24px;
  margin-top: -2px;
}
.tab-title.fade {
  mask-image: linear-gradient(to right, #000 150px, transparent 180px);
}
.tab-close {
  margin-left: 15px;
}
.new-tab {
  margin-left: 19px;
}
.window-buttons {
  display: flex;
  gap: 43.200px;
  margin-left: 93.500px;
  margin-top: -6px;
}

.toolbar {
  height: 53px;
  flex: none;
  display: flex;
  align-items: center;
}
.nav {
  width: 135px;
  display: flex;
  gap: 22.200px;
  padding-left: 18.500px;
  margin-top: -2px;
}
.omnibox {
  width: 1544px;
  height: 43px;
  border-radius: 22px;
  background: #202124;
  display: flex;
  align-items: center;
  padding-left: 16px;
  font-size: 17px;
  line-height: 24px;
}
.lock {
  margin-right: 14.500px;
}
.path {
  color: #9aa0a6;
}
.omni-icons {
  display: flex;
  gap: 20px;
  margin-left: auto;
  margin-right: 13px;
}
.puzzle {
  margin-left: 17px;
  margin-right: 1px;
  margin-top: -2px;
}
.panel {
  margin-left: 19px;
  margin-top: -1px;
}
.profile {
  width: 101px;
  height: 35px;
  margin-left: 14px;
  margin-top: -2px;
  border: 2px solid #8ab4f8;
  border-radius: 18px;
  background: #3c4353;
  color: #8ab4f8;
  display: flex;
  align-items: center;
  padding-left: 2px;
  gap: 8.500px;
}
.menu {
  margin-left: 20px;
  margin-top: -1px;
}

.bookmarks {
  height: 40px;
  flex: none;
  display: flex;
  align-items: center;
  padding: 0 18px 6px;
  border-bottom: 1px solid #5b5c60;
}
.bookmark {
  display: flex;
  align-items: center;
  gap: 10px;
  margin-right: 20.700px;
}
.bookmark .fit,
.bookmarks > .fit {
  line-height: 22px;
}
.more {
  margin-left: auto;
  font-weight: 700;
  margin-top: -4px;
}
.divider {
  width: 1px;
  height: 20px;
  background: #6a6b6e;
  margin: 0 14px 0 13px;
}
.folder {
  margin-right: 11px;
}

.viewport {
  height: 884px;
  flex: none;
  display: flex;
  background: #fff;
  color: #333;
  font-family: "DejaVu Sans", sans-serif;
}
.page {
  width: 1899px;
  display: flex;
  flex-direction: column;
}
.masthead {
  height: 124px;
  flex: none;
  display: flex;
  background: #fefefe;
  box-shadow: 0 10px 12px rgba(0, 0, 0, 0.3);
}
.logo {
  overflow: visible;
}
.headings {
  padding: 27px 0 0 15px;
}
h1 {
  font-size: 24.500px;
  line-height: 30px;
  height: 27px;
}
.headings p {
  font-size: 17px;
  font-weight: 700;
  font-style: italic;
  line-height: 22px;
}
.report {
  width: 1200px;
  margin-left: 350px;
}
h2 {
  margin: 14px 0 0 -1px;
  color: #f00;
  font-size: 19.500px;
  line-height: 24px;
  height: 23px;
}
.summary {
  height: 28px;
  font-size: 17px;
  line-height: 24px;
  border-bottom: 3px double #f00;
}
.summary .fit,
h3 .fit {
  margin-left: -1px;
}
h3 {
  height: 61px;
  padding-top: 19px;
  font-size: 17px;
  line-height: 24px;
}
.table {
  border: 1px solid #808080;
  border-bottom: 0;
}
.row {
  display: grid;
  grid-template-columns: 58px 142px 142px 314px 312px 230px;
  border-bottom: 1px solid #000;
  margin: 0 -1px;
  padding: 0 1px;
}
.row.head {
  height: 42px;
  align-items: center;
  font-size: 14.200px;
  font-weight: 700;
  line-height: 15px;
}
.single {
  padding-top: 2px;
}
.center {
  text-align: center;
}
.left {
  padding-left: 5px;
}
.row.item {
  height: 162.500px;
}
.row.shaded {
  background: #f1f1f1;
  background-clip: padding-box;
  border-left: 1px solid #808080;
  border-right: 1px solid #808080;
  padding: 0;
}
.number {
  padding-top: 12px;
  color: #f00;
  font-size: 14px;
  font-weight: 700;
  line-height: 20px;
  text-align: center;
}
.swatch-cell {
  padding: 14px 11px 0;
}
.swatch {
  width: 120px;
  height: 133.500px;
  border: 1px solid #222;
  background: #fff;
  padding: 3px;
  font-size: 12.400px;
}
.chip {
  height: 92px;
  border: 1px solid #666;
  margin-bottom: 5px;
}
.swatch p {
  line-height: 15.400px;
  height: 15.400px;
  padding-left: 1px;
}
.swatch .rgb {
  font-size: 11.800px;
  padding-top: 0.800px;
}
.font {
  display: grid;
  grid-template-columns: 92px 1fr;
  grid-auto-rows: 15.400px;
  grid-template-rows: 20.400px;
  padding: 15.800px 0 0 9px;
  font-size: 12.600px;
  line-height: 15.400px;
}
dt {
  font-weight: 700;
}
.content {
  padding: 16.500px 0 0 9px;
}
.quote {
  display: flex;
  align-items: center;
  height: 16px;
  font: 700 12.300px/16px "Liberation Sans", sans-serif;
  color: #333;
}
.quote .fit {
  margin: 0 4.500px 0 4.500px;
}
.quote svg {
  margin-top: -1px;
}
button {
  height: 20.500px;
  display: flex;
  align-items: center;
  gap: 4px;
  padding: 0 7px;
  border: 1px solid #767676;
  border-radius: 3px;
  background: #efefef;
  color: #000;
  font: 13.300px/16px "Liberation Sans", sans-serif;
}
.snippet {
  width: 125px;
  margin-top: 11.400px;
}
.test {
  width: 109px;
  margin: 9.200px 0 0;
}
.ratio {
  padding: 15.800px 10px 0 8px;
  font-size: 12.800px;
  line-height: 15.400px;
}
.pair {
  display: flex;
  justify-content: space-between;
  font-weight: 700;
}
.bad {
  color: #f00;
}
.ratio p {
  margin-top: 17.200px;
  font-size: 14.200px;
}
.footer {
  height: 71px;
  margin-top: auto;
  border-top: 1px solid #808080;
  background: #eee;
  padding-top: 15px;
  font-size: 13px;
}
.footer p {
  display: flex;
  justify-content: center;
  align-items: flex-start;
  height: 22px;
  line-height: 16px;
  padding: 2px 0 0 9px;
}
.footer a {
  height: 17px;
  color: #000080;
  border-bottom: 1px dotted #5555cc;
}
.footer a.home {
  color: #0000ee;
}
.footer i {
  width: 13.500px;
  text-align: center;
  font-style: normal;
}
.footer sup {
  width: 15px;
  font-size: 11.500px;
  line-height: 8px;
}
.scrollbar {
  position: relative;
  width: 21px;
  background: #f1f1f1;
  display: flex;
  flex-direction: column;
  align-items: center;
  padding: 9px 0;
}
.thumb {
  width: 17px;
  height: 308px;
  margin: 138px 0 auto;
  background: #c1c1c1;
}

.taskbar {
  height: 60px;
  flex: none;
  display: flex;
  align-items: flex-start;
  background: #222;
  border-top: 1px solid #3e4040;
}
.apps {
  display: flex;
  padding-left: 331px;
}
.app {
  position: relative;
  width: 55px;
  height: 58px;
  display: flex;
  align-items: center;
  justify-content: center;
}
.app:first-child {
  width: 57px;
}
.shift {
  margin-left: -2px;
}
.app.current::before {
  content: "";
  position: absolute;
  inset: 4px 3px 4px;
  border: 1px solid #3d3d3d;
  border-radius: 4px;
  background: #303030;
}
.app.current > svg {
  position: relative;
}
.app.current > .badge {
  position: absolute;
  left: 29px;
  top: 8px;
}
.dot {
  position: absolute;
  left: 23.500px;
  top: 49px;
  width: 8px;
  height: 4px;
  border-radius: 2px;
  background: #989898;
}
.current .dot {
  left: 17.500px;
  width: 20px;
  background: #f08066;
}
.tray {
  flex: 1;
  height: 57px;
  display: flex;
  align-items: center;
  padding-left: 27.500px;
  font-size: 14.500px;
  line-height: 20px;
}
.drive {
  margin-left: 23px;
}
.keys {
  margin-left: 19px;
}
.lang {
  width: 30px;
  margin-left: 23px;
  display: flex;
  flex-direction: column;
  align-items: center;
}
.wifi {
  margin-left: 22px;
}
.sound {
  margin-left: 9px;
}
.battery {
  margin-left: 9px;
}
.clock {
  width: 78px;
  margin-left: 19px;
  display: flex;
  flex-direction: column;
  align-items: flex-end;
}
.bell {
  margin-left: 11px;
}
</style>
